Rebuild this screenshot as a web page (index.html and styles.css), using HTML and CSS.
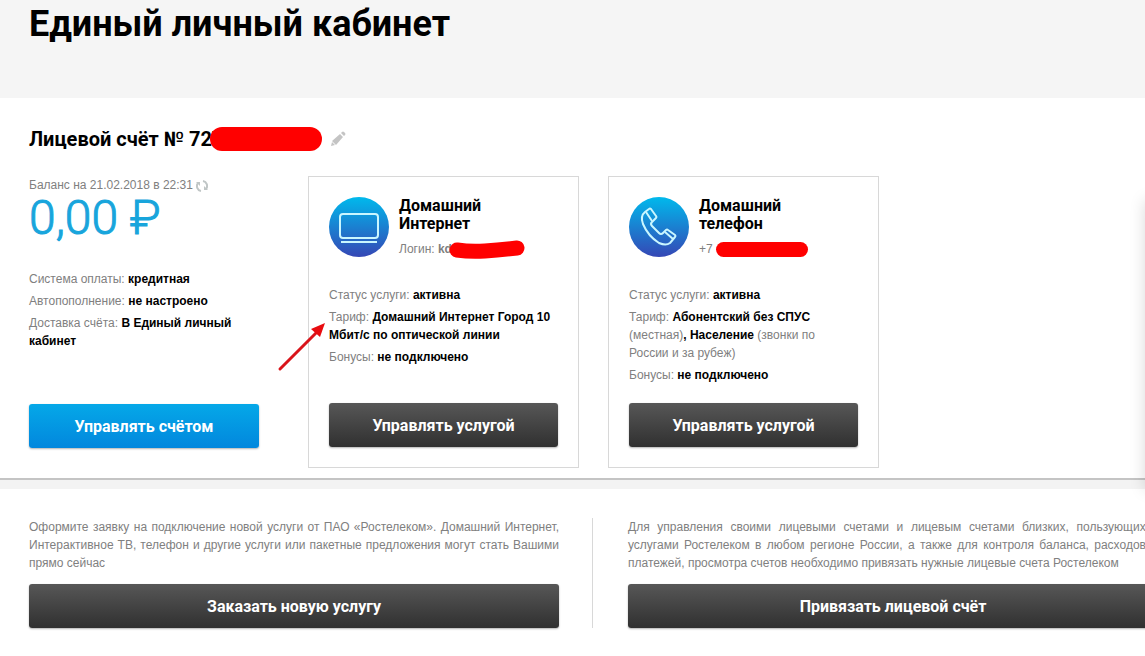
FILE: index.html
```
<!DOCTYPE html>
<html lang="ru">
<head>
  <meta charset="UTF-8">
  <meta name="viewport" content="width=device-width, initial-scale=1.0">
  <title>Единый личный кабинет</title>
  <link rel="stylesheet" href="styles.css">
</head>
<body>
  <header class="page-header">
    <h1>Единый личный кабинет</h1>
  </header>

  <main>
    <section class="account">
      <div class="account-title">
        <h2>Лицевой счёт № 727</h2>
        <span class="mask mask-account"></span>
        <button class="icon-btn" type="button" aria-label="Изменить название">
          <svg width="16" height="16" viewBox="0 0 16 16">
            <path d="M1 15l1-4 3 3z M2 10l8-7 3 3-7 8z M11 2l1-1q1-1 2 0l1 1q1 1 0 2l-1 1z" fill="#c4c4c4"/>
          </svg>
        </button>
      </div>

      <div class="account-row">
        <!-- Баланс -->
        <div class="balance">
          <p class="balance-date">
            Баланс на 21.02.2018 в 22:31
            <button class="icon-btn" type="button" aria-label="Обновить баланс">
              <svg width="12" height="12" viewBox="0 0 12 12" fill="none" stroke="#c0c6c6" stroke-width="2">
                <path d="M5 11A5 5 0 0 1 2 3"/>
                <path d="M7 1A5 5 0 0 1 10 9"/>
                <path d="M0 2h4v4z M12 10H8V6z" fill="#c0c6c6" stroke="none"/>
              </svg>
            </button>
          </p>
          <p class="balance-sum">0,00 ₽</p>
          <ul class="details">
            <li>Система оплаты: <b>кредитная</b></li>
            <li>Автопополнение: <b>не настроено</b></li>
            <li>Доставка счёта: <b>В Единый личный кабинет</b></li>
          </ul>
          <button class="btn btn-blue" type="button">Управлять счётом</button>
        </div>

        <!-- Интернет -->
        <article class="card">
          <div class="card-head">
            <svg class="card-icon" width="60" height="60" viewBox="0 0 60 60">
              <defs>
                <linearGradient id="blue" x1="0" y1="0" x2="0" y2="1">
                  <stop offset="0" stop-color="#00b9ec"/>
                  <stop offset="1" stop-color="#3547b5"/>
                </linearGradient>
              </defs>
              <circle cx="30" cy="30" r="30" fill="url(#blue)"/>
              <rect x="11" y="17" width="38" height="24" rx="3" fill="none" stroke="#c9f6ff" stroke-width="2"/>
              <path d="M12 45h36" stroke="#c9f6ff" stroke-width="2"/>
            </svg>
            <div>
              <h3>Домашний<br>Интернет</h3>
              <p class="login">Логин: <b>kd</b><span class="mask-login"><svg width="78" height="20" viewBox="0 0 78 20"><path d="M9 10q13 2 28 1t32-3" fill="none" stroke="#f00" stroke-width="15" stroke-linecap="round"/></svg></span></p>
            </div>
          </div>
          <ul class="details">
            <li>Статус услуги: <b>активна</b></li>
            <li>Тариф: <b>Домашний Интернет Город 10 Мбит/с по оптической линии</b></li>
            <li>Бонусы: <b>не подключено</b></li>
          </ul>
          <button class="btn" type="button">Управлять услугой</button>
          <svg class="arrow" width="50" height="52" viewBox="0 0 50 52">
            <path d="M3 49L40 12" stroke="#d9141a" stroke-width="3" stroke-linecap="round"/>
            <path d="M48 3L43 17 34 9z" fill="#e80c10"/>
          </svg>
        </article>

        <!-- Телефон -->
        <article class="card">
          <div class="card-head">
            <svg class="card-icon" width="60" height="60" viewBox="0 0 60 60">
              <circle cx="30" cy="30" r="30" fill="url(#blue)"/>
              <g fill="none" stroke="#c9f6ff" stroke-width="2" stroke-linejoin="round">
                <path d="M16 15l4-3q1-1 2 0l5 7q1 1 0 2l-4 4q-2 2 0 4l7 7q2 2 4 0l3-3q1-1 2 0l7 5q1 1 0 2l-5 6q-4 3-11 0Q19 39 14 27q-3-8 2-12z"/>
                <path d="M17 15l6 9M36 35l8 7"/>
              </g>
            </svg>
            <div>
              <h3>Домашний<br>телефон</h3>
              <p class="login">+7 <span class="mask mask-phone"></span></p>
            </div>
          </div>
          <ul class="details">
            <li>Статус услуги: <b>активна</b></li>
            <li>Тариф: <b>Абонентский без СПУС</b> (местная)<b>, Население</b> (звонки по России и за рубеж)</li>
            <li>Бонусы: <b>не подключено</b></li>
          </ul>
          <button class="btn" type="button">Управлять услугой</button>
        </article>
      </div>
    </section>

    <section class="offers">
      <div class="offer">
        <p>Оформите заявку на подключение новой услуги от ПАО «Ростелеком». Домашний Интернет, Интерактивное ТВ, телефон и другие услуги или пакетные предложения могут стать Вашими прямо сейчас</p>
        <button class="btn" type="button">Заказать новую услугу</button>
      </div>
      <div class="offer">
        <p>Для управления своими лицевыми счетами и лицевым счетами близких, пользующихся услугами Ростелеком в любом регионе России, а также для контроля баланса, расходов и платежей, просмотра счетов необходимо привязать нужные лицевые счета Ростелеком</p>
        <button class="btn" type="button">Привязать лицевой счёт</button>
      </div>
    </section>
  </main>

  <aside class="side-panel"></aside>
</body>
</html>
```
FILE: styles.css
```
* {
  box-sizing: border-box;
}

body {
  margin: 0;
  background: #fff;
  color: #808080;
  font: 12px/18px "Liberation Sans", Arial, sans-serif;
  overflow-x: hidden;
}

h1, h2, h3, p, ul {
  margin: 0;
  padding: 0;
}

h1, h2, h3 {
  font-family: Roboto, sans-serif;
  font-weight: 700;
  color: #000;
}

.page-header {
  background: #f5f5f5;
  padding: 0 29px 50px;
}

h1 {
  font-size: 36px;
  line-height: 48px;
}

h2 {
  font-size: 20px;
  line-height: 26px;
}

h3 {
  font-size: 16px;
  line-height: 18px;
}

/* Лицевой счёт */
.account {
  padding: 28px 29px 10px;
  border-bottom: 2px solid #c4c4c4;
}

.account-title {
  display: flex;
  align-items: center;
  margin-bottom: 24px;
}

.mask {
  display: inline-block;
  background: #f00;
  border-radius: 12px;
}

.mask-account {
  width: 112px;
  height: 24px;
  margin-left: -13px;
  margin-right: 8px;
}

.mask-phone {
  width: 92px;
  height: 15px;
  vertical-align: middle;
}

.mask-login {
  position: absolute;
  margin-left: -4px;
}

.icon-btn {
  padding: 0;
  border: 0;
  background: none;
  line-height: 0;
  vertical-align: middle;
  cursor: pointer;
}

.account-row {
  display: flex;
  gap: 29px;
}

.balance {
  display: flex;
  flex-direction: column;
  width: 230px;
  margin-right: 20px;
  padding-bottom: 20px;
}

.balance-sum {
  font: 300 48px/48px Roboto, sans-serif;
  color: #18a5dc;
  -webkit-text-stroke: 1px #18a5dc;
  margin-bottom: 28px;
}

.details {
  display: flex;
  flex-direction: column;
  gap: 4px;
  list-style: none;
  margin-bottom: 19px;
}

.details b {
  color: #000;
}

.card {
  position: relative;
  display: flex;
  flex-direction: column;
  width: 271px;
  padding: 20px;
  border: 1px solid #d8d8d8;
}

.card .details {
  padding-right: 4px;
}

.card-head {
  display: flex;
  gap: 10px;
  margin-bottom: 28px;
}

.card-icon {
  flex: none;
}

.login {
  margin-top: 7px;
}

.arrow {
  position: absolute;
  left: -32px;
  top: 143px;
}

/* Кнопки */
.btn {
  width: 100%;
  height: 44px;
  margin-top: auto;
  border: 0;
  border-radius: 3px;
  background: linear-gradient(#575757, #303030);
  box-shadow: 0 1px 2px rgba(0, 0, 0, 0.3);
  color: #fff;
  font: 700 16px Roboto, sans-serif;
  cursor: pointer;
}

.btn-blue {
  background: linear-gradient(#05a8e8, #0287dd);
}

/* Предложения */
.offers {
  display: flex;
  min-width: 1187px;
  padding: 29px;
  border-top: 9px solid #f3f3f3;
}

.offer {
  flex: 1;
  text-align: justify;
}

.offer + .offer {
  border-left: 1px solid #d8d8d8;
  margin-left: 33px;
  padding-left: 35px;
}

.offer p {
  margin-bottom: 12px;
}

/* Панель за правым краем окна */
.side-panel {
  position: fixed;
  left: 100%;
  top: 200px;
  width: 40px;
  height: 290px;
  box-shadow: 0 0 16px rgba(0, 0, 0, 0.15);
}
```
